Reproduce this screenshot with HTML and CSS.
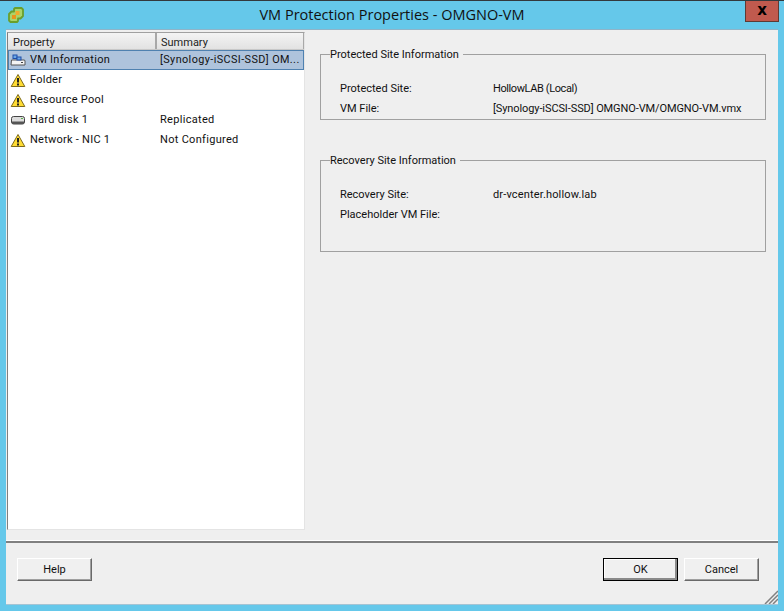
FILE: index.html
```html
<!DOCTYPE html>
<html lang="en">
<head>
<meta charset="utf-8">
<title>VM Protection Properties - OMGNO-VM</title>
<link rel="stylesheet" href="styles.css">
</head>
<body>
<div class="window">
  <header class="titlebar">
    <svg class="app-icon" width="16" height="16" viewBox="0 0 16 16">
      <path d="M7 1h6.500l1.500 1.500V9l-2.500 2.500H10V14l-1 1H2.500L1 13.500V7l2.500-2.500H6V2z" fill="#a9d46a" stroke="#6a9f2c" stroke-width="1.800" stroke-linejoin="round"/>
      <rect x="4" y="8" width="4" height="4" fill="#e8951c"/>
      <rect x="7.500" y="4" width="4" height="4" fill="#f2a92c"/>
    </svg>
    <h1 class="title">VM Protection Properties - OMGNO-VM</h1>
    <button class="close" type="button">x</button>
  </header>
  <div class="panel">
    <main class="content">
      <section class="list">
        <div class="list-head">
          <div class="col-prop">Property</div>
          <div class="col-sum">Summary</div>
        </div>
        <div class="row selected">
          <span class="cell-name">
            <svg class="icon" width="16" height="16" viewBox="0 0 16 16">
              <path d="M1.500 8h13l.5 1v4H1z" fill="#f4f4f4" stroke="#555"/>
              <rect x="3" y="3" width="4" height="3.500" fill="#6aa8e8" stroke="#1f4fa8"/>
              <rect x="7" y="5" width="4" height="3" fill="#6aa8e8" stroke="#1f4fa8"/>
              <rect x="11" y="10" width="2" height="1" fill="#444"/>
            </svg>VM Information</span>
          <span class="cell-sum">[Synology-iSCSI-SSD] OM...</span>
        </div>
        <div class="row">
          <span class="cell-name">
            <svg class="icon" width="16" height="16" viewBox="0 0 16 16"><path d="M8 2.500L14.800 14.500H1.200z" fill="#ffdc34" stroke="#7d6a1c" stroke-linejoin="round"/><rect x="7" y="6" width="2" height="4.500" fill="#222"/><rect x="7" y="11.500" width="2" height="2" fill="#222"/></svg>Folder</span>
        </div>
        <div class="row">
          <span class="cell-name">
            <svg class="icon" width="16" height="16" viewBox="0 0 16 16"><path d="M8 2.500L14.800 14.500H1.200z" fill="#ffdc34" stroke="#7d6a1c" stroke-linejoin="round"/><rect x="7" y="6" width="2" height="4.500" fill="#222"/><rect x="7" y="11.500" width="2" height="2" fill="#222"/></svg>Resource Pool</span>
        </div>
        <div class="row">
          <span class="cell-name">
            <svg class="icon" width="16" height="16" viewBox="0 0 16 16"><rect x="1.500" y="4.500" width="13" height="7.500" rx="2" fill="#dcdcdc" stroke="#444"/><rect x="2" y="9.500" width="12" height="2.500" fill="#555"/><rect x="11" y="6" width="2" height="1" fill="#5bb04a"/></svg>Hard disk 1</span>
          <span class="cell-sum">Replicated</span>
        </div>
        <div class="row">
          <span class="cell-name">
            <svg class="icon" width="16" height="16" viewBox="0 0 16 16"><path d="M8 2.500L14.800 14.500H1.200z" fill="#ffdc34" stroke="#7d6a1c" stroke-linejoin="round"/><rect x="7" y="6" width="2" height="4.500" fill="#222"/><rect x="7" y="11.500" width="2" height="2" fill="#222"/></svg>Network - NIC 1</span>
          <span class="cell-sum">Not Configured</span>
        </div>
      </section>
      <section class="details">
        <fieldset class="group group-protected">
          <legend>Protected Site Information</legend>
          <dl class="fields">
            <dt>Protected Site:</dt><dd class="tight-more">HollowLAB (Local)</dd>
            <dt>VM File:</dt><dd class="tight">[Synology-iSCSI-SSD] OMGNO-VM/OMGNO-VM.vmx</dd>
          </dl>
        </fieldset>
        <fieldset class="group group-recovery">
          <legend>Recovery Site Information</legend>
          <dl class="fields">
            <dt>Recovery Site:</dt><dd class="loose">dr-vcenter.hollow.lab</dd>
            <dt>Placeholder VM File:</dt><dd></dd>
          </dl>
        </fieldset>
      </section>
    </main>
    <footer class="footer">
      <button class="btn" type="button">Help</button>
      <div class="actions">
        <button class="btn btn-default" type="button">OK</button>
        <button class="btn" type="button">Cancel</button>
      </div>
      <svg class="grip" width="14" height="14" viewBox="0 0 14 14">
        <path d="M14 1L1 14M14 5L5 14M14 9L9 14" stroke="#808080" stroke-width="1.500"/>
      </svg>
    </footer>
  </div>
</div>
</body>
</html>
```

FILE: styles.css
```css
* { box-sizing: border-box; }
html, body { margin: 0; height: 100%; }
body {
  font-family: Roboto, "Open Sans", sans-serif;
  font-size: 11px;
  color: #111;
  background: #65c8ea;
  overflow: hidden;
}
.window {
  height: 611px;
  display: flex;
  flex-direction: column;
  border-top: 1px solid #33393d;
  padding: 0 6px 7px;
}
.titlebar {
  height: 29px;
  flex: none;
  display: flex;
  align-items: center;
  justify-content: center;
  position: relative;
}
.app-icon { position: absolute; left: 2px; top: 6px; }
.title {
  margin: 0 0 2px 0;
  font-family: "Open Sans", sans-serif;
  font-size: 14.500px;
  font-weight: 400;
  color: #111;
}
.close {
  position: absolute;
  right: -1px;
  top: 0;
  width: 34px;
  height: 21px;
  padding: 0 0 1px;
  border: 1px solid #5e3a34;
  border-top: 0;
  background: #c05a4e;
  color: #000;
  font: 700 15px/1 "DejaVu Sans", sans-serif;
}
.panel {
  flex: 1;
  display: flex;
  flex-direction: column;
  min-height: 0;
  background: #efefef;
  box-shadow: 0 -1px 0 #8fb4c8, 0 1px 0 #a5c4d4;
}
.content {
  flex: 1;
  display: flex;
  min-height: 0;
  padding: 2px 0 0 1px;
}
.list {
  width: 298px;
  height: 498px;
  flex: none;
  background: #fff;
  border-top: 1px solid #a0a0a0;
  border-left: 1px solid #808080;
  border-bottom: 1px solid #e4e4e4;
  border-right: 1px solid #e4e4e4;
}
.list-head {
  display: flex;
  height: 17px;
  background: linear-gradient(#f4f4f4, #e2e2e2);
  border-bottom: 1px solid #c8c8c8;
  color: #222;
  line-height: 19px;
}
.col-prop {
  width: 149px;
  padding-left: 5px;
  border-right: 2px solid #a8a8a8;
}
.col-sum {
  flex: 1;
  padding-left: 4px;
  border-right: 1px solid #a8a8a8;
}
.row {
  display: flex;
  height: 20px;
  align-items: center;
  line-height: 18px;
}
.row.selected {
  background: #aec3dc;
  border: 1px solid #4f81b0;
}
.selected .cell-name { width: 151px; padding-left: 1px; }
.cell-name {
  width: 152px;
  padding-left: 2px;
  display: flex;
  align-items: center;
  gap: 4px;
  white-space: nowrap;
  letter-spacing: 0.25px;
}
.cell-sum { white-space: nowrap; letter-spacing: 0.3px; }
.selected .cell-sum { letter-spacing: 0.4px; font-size: 10.850px; }
.icon { flex: none; }
.details {
  flex: 1;
  padding: 14px 12px 0 15px;
  display: flex;
  flex-direction: column;
  gap: 33px;
}
.group {
  margin: 0;
  padding: 0;
  border: 1px solid #a0a0a0;
  min-width: 0;
}
.group-protected { height: 74px; }
.group-recovery { height: 100px; margin-top: -1px; }
.group legend {
  padding: 2px 4px 0 0;
  margin-left: 9px;
  font-size: 11px;
  line-height: 14px;
}
.fields {
  margin: 16px 0 0 19px;
  display: grid;
  grid-template-columns: 153px 1fr;
  grid-auto-rows: 20px;
  align-items: center;
}
.fields dt, .fields dd { margin: 0; white-space: nowrap; }
.fields .tight { letter-spacing: -0.1px; }
.fields .tight-more { letter-spacing: -0.4px; }
.fields .loose { letter-spacing: 0.15px; }
.footer {
  flex: none;
  height: 63px;
  position: relative;
  display: flex;
  justify-content: space-between;
  align-items: flex-start;
  padding: 15px 19px 0 11px;
  border-top: 2px solid #808080;
  box-shadow: 0 -1px 0 #fff;
}
.actions { display: flex; gap: 6px; }
.btn {
  width: 75px;
  height: 23px;
  padding: 0;
  font: 11px Roboto, "Open Sans", sans-serif;
  color: #111;
  background: #f0f0f0;
  border: 1px solid;
  border-color: #fff #696969 #696969 #fff;
  box-shadow: inset -1px -1px 0 #a0a0a0;
}
.btn-default {
  border: 1px solid #000;
  box-shadow: inset -2px -2px 0 #8a8a8a, inset 1px 1px 0 #fff;
}
.grip { position: absolute; right: 0; bottom: 0; }
```
